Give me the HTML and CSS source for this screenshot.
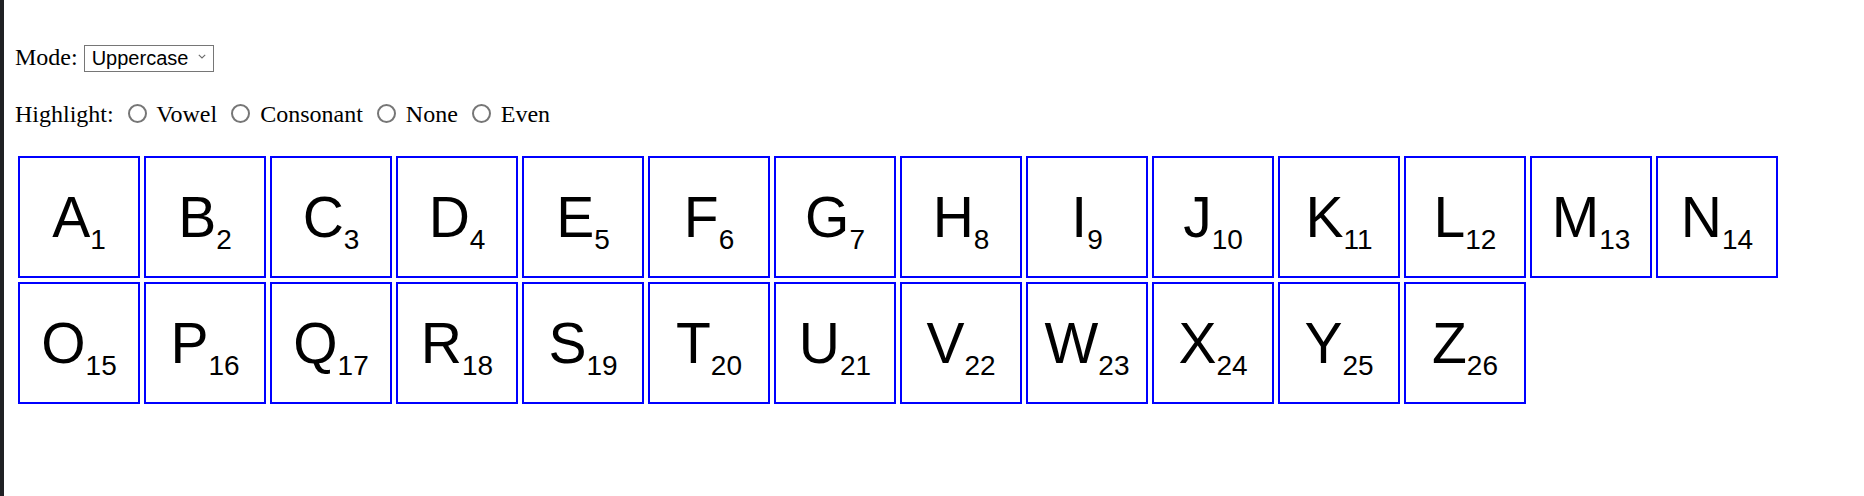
FILE: index.html
```html
<!DOCTYPE html>
<html lang="en">
<head>
<meta charset="utf-8">
<title>Alphabet</title>
<link rel="stylesheet" href="styles.css">
</head>
<body>
<div class="page">
  <div class="mode-row">Mode: <span class="select-wrap"><select class="select" name="mode"><option>Uppercase</option><option>Lowercase</option></select><svg class="chev" width="8" height="5" viewBox="0 0 8 5" aria-hidden="true"><path d="M0.8 0.8 L4 4 L7.2 0.8" fill="none" stroke="#6b6b6b" stroke-width="1.1"/></svg></span></div>
  <div class="hl-row">Highlight: <label><input class="radio" type="radio" name="hl"> Vowel</label> <label><input class="radio" type="radio" name="hl"> Consonant</label> <label><input class="radio" type="radio" name="hl"> None</label> <label><input class="radio" type="radio" name="hl"> Even</label></div>
  <div class="grid">
    <div class="tile"><span class="glyph">A<sub>1</sub></span></div>
    <div class="tile"><span class="glyph">B<sub>2</sub></span></div>
    <div class="tile"><span class="glyph">C<sub>3</sub></span></div>
    <div class="tile"><span class="glyph">D<sub>4</sub></span></div>
    <div class="tile"><span class="glyph">E<sub>5</sub></span></div>
    <div class="tile"><span class="glyph">F<sub>6</sub></span></div>
    <div class="tile"><span class="glyph">G<sub>7</sub></span></div>
    <div class="tile"><span class="glyph">H<sub>8</sub></span></div>
    <div class="tile"><span class="glyph">I<sub>9</sub></span></div>
    <div class="tile"><span class="glyph">J<sub>10</sub></span></div>
    <div class="tile"><span class="glyph">K<sub>11</sub></span></div>
    <div class="tile"><span class="glyph">L<sub>12</sub></span></div>
    <div class="tile"><span class="glyph">M<sub>13</sub></span></div>
    <div class="tile"><span class="glyph">N<sub>14</sub></span></div>
    <div class="tile"><span class="glyph">O<sub>15</sub></span></div>
    <div class="tile"><span class="glyph">P<sub>16</sub></span></div>
    <div class="tile"><span class="glyph">Q<sub>17</sub></span></div>
    <div class="tile"><span class="glyph">R<sub>18</sub></span></div>
    <div class="tile"><span class="glyph">S<sub>19</sub></span></div>
    <div class="tile"><span class="glyph">T<sub>20</sub></span></div>
    <div class="tile"><span class="glyph">U<sub>21</sub></span></div>
    <div class="tile"><span class="glyph">V<sub>22</sub></span></div>
    <div class="tile"><span class="glyph">W<sub>23</sub></span></div>
    <div class="tile"><span class="glyph">X<sub>24</sub></span></div>
    <div class="tile"><span class="glyph">Y<sub>25</sub></span></div>
    <div class="tile"><span class="glyph">Z<sub>26</sub></span></div>
  </div>
</div>
</body>
</html>
```

FILE: styles.css
```css
html, body {
  margin: 0;
  padding: 0;
  background: #ffffff;
}

body {
  font-family: "Liberation Serif", "Times New Roman", serif;
  font-size: 24px;
  color: #000000;
}

.page {
  min-height: 496px;
  box-sizing: border-box;
  border-left: 4px solid #202124;
  padding: 44px 0 0 11px;
}

.mode-row {
  line-height: normal;
}

.select-wrap {
  position: relative;
  display: inline-block;
  vertical-align: baseline;
}

.select {
  appearance: none;
  -webkit-appearance: none;
  box-sizing: border-box;
  width: 130px;
  height: 27px;
  margin: 0;
  padding: 0 0 0 7px;
  border: 1px solid #767676;
  border-radius: 0;
  background: #ffffff;
  color: #000000;
  font-family: "Liberation Sans", Arial, sans-serif;
  font-size: 20px;
}

.chev {
  position: absolute;
  right: 8px;
  top: 10px;
  pointer-events: none;
}

.hl-row {
  margin-top: 28px;
  line-height: normal;
}

.hl-row label {
  white-space: nowrap;
}

.radio {
  appearance: none;
  -webkit-appearance: none;
  box-sizing: border-box;
  width: 19px;
  height: 19px;
  margin: 4px 4px 0 8px;
  border: 2px solid #767676;
  border-radius: 50%;
  background: #ffffff;
  vertical-align: -1px;
}

.grid {
  margin-top: 28px;
  padding-left: 3px;
  display: grid;
  grid-template-columns: repeat(14, 122px);
  gap: 4px;
}

.tile {
  box-sizing: border-box;
  width: 122px;
  height: 122px;
  border: 2px solid #0000ff;
  display: flex;
  align-items: center;
  justify-content: center;
  font-family: "Liberation Sans", Arial, sans-serif;
  font-size: 57px;
  line-height: normal;
}

.glyph {
  display: block;
  line-height: normal;
}

.glyph sub {
  font-size: 28px;
  line-height: 0;
  vertical-align: sub;
}
```
